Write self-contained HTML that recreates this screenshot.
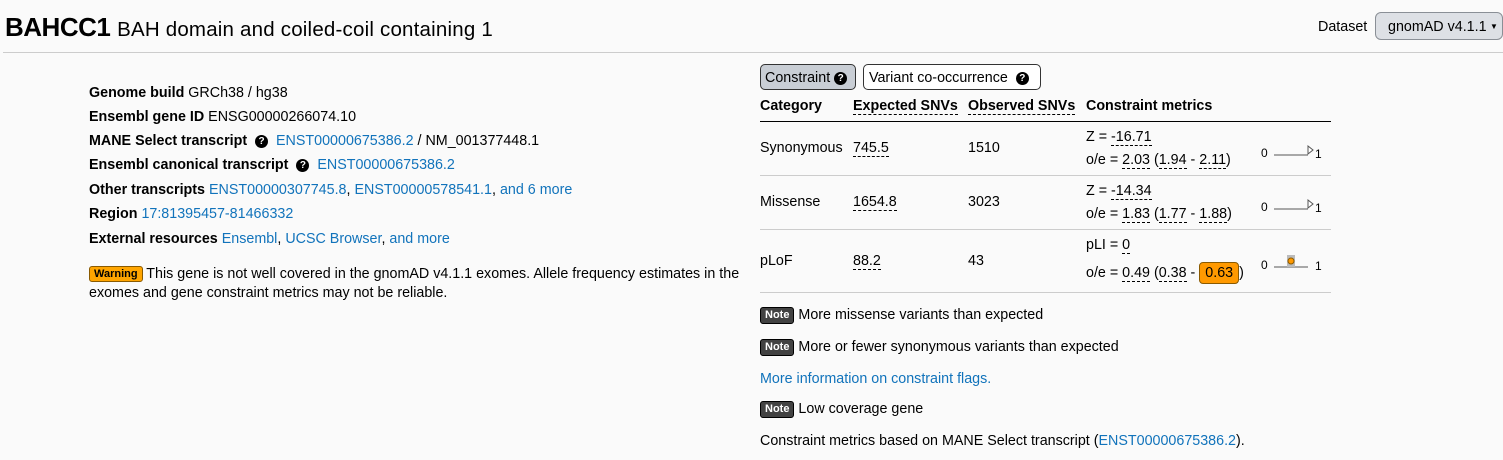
<!DOCTYPE html>
<html><head><meta charset="utf-8"><style>
*{box-sizing:border-box;margin:0;padding:0}
body{width:1503px;height:460px;background:#fafafa;font-family:"Liberation Sans",sans-serif;font-size:14.3px;color:#000;position:relative;overflow:hidden}
.a{position:absolute;white-space:nowrap}
a,.l{color:#1173bb;text-decoration:none}
b{font-weight:bold}
.u{border-bottom:1px dashed #000}
.q{display:inline-block;width:13px;height:13px;border-radius:50%;background:#000;color:#fff;font-size:10px;font-weight:bold;text-align:center;line-height:13px;vertical-align:1px}
.note{display:inline-block;background:#424242;color:#fff;font-size:11px;font-weight:bold;border:1px solid #000;border-radius:3px;padding:0 4px;line-height:15px;vertical-align:1px}
.hr{position:absolute;height:1px;background:#ccc}
</style></head><body>
<div class="a" style="left:5px;top:12px;font-size:26px;font-weight:bold;letter-spacing:-0.5px">BAHCC1 <span style="font-size:20.5px;font-weight:normal;letter-spacing:0.2px">BAH domain and coiled-coil containing 1</span></div>
<div class="hr" style="left:3px;right:0;top:52px"></div>
<div class="a" style="left:1318px;top:19px">Dataset</div>
<div class="a" style="left:1375px;top:12px;width:128px;height:28px;background:#dde0e5;border:1px solid #8a8f96;border-radius:6px;padding:6px 0 0 12px">gnomAD v4.1.1<span style="font-size:8px;position:absolute;left:114px;top:9px">▼</span></div>

<div class="a" style="left:89px;top:85px"><b>Genome build</b> GRCh38 / hg38</div>
<div class="a" style="left:89px;top:109px"><b>Ensembl gene ID</b> ENSG00000266074.10</div>
<div class="a" style="left:89px;top:133px"><b>MANE Select transcript</b> &nbsp;<span class="q">?</span> &nbsp;<a>ENST00000675386.2</a> / NM_001377448.1</div>
<div class="a" style="left:89px;top:157px"><b>Ensembl canonical transcript</b> &nbsp;<span class="q">?</span> &nbsp;<a>ENST00000675386.2</a></div>
<div class="a" style="left:89px;top:182px"><b>Other transcripts</b> <a>ENST00000307745.8</a>, <a>ENST00000578541.1</a>, <a>and 6 more</a></div>
<div class="a" style="left:89px;top:206px"><b>Region</b> <a>17:81395457-81466332</a></div>
<div class="a" style="left:89px;top:231px"><b>External resources</b> <a>Ensembl</a>, <a>UCSC Browser</a>, <a>and more</a></div>
<div class="a" style="left:89px;top:265px;line-height:19px;white-space:normal;width:665px"><span style="display:inline-block;background:#ffa500;border:1px solid #8a5a00;border-radius:3px;font-size:11px;font-weight:bold;padding:0 4px;line-height:14px;vertical-align:1px">Warning</span> This gene is not well covered in the gnomAD v4.1.1 exomes. Allele frequency estimates in the exomes and gene constraint metrics may not be reliable.</div>

<div class="a" style="left:760px;top:64px;width:96px;height:26px;background:#c9ced5;border:1px solid #333;border-radius:5px;padding:5px 0 0 4px">Constraint <span class="q">?</span></div>
<div class="a" style="left:863px;top:64px;width:178px;height:26px;border:1px solid #333;border-radius:5px;padding:5px 0 0 5px;background:#fff">Variant co-occurrence &nbsp;<span class="q">?</span></div>

<div class="a" style="left:760px;top:98px"><b>Category</b></div>
<div class="a" style="left:853px;top:98px"><b class="u">Expected SNVs</b></div>
<div class="a" style="left:968px;top:98px"><b class="u">Observed SNVs</b></div>
<div class="a" style="left:1086px;top:98px"><b>Constraint metrics</b></div>
<div class="hr" style="left:760px;width:571px;top:121px;background:#000"></div>

<div class="a" style="left:760px;top:140px">Synonymous</div>
<div class="a" style="left:853px;top:140px"><span class="u">745.5</span></div>
<div class="a" style="left:968px;top:140px">1510</div>
<div class="a" style="left:1086px;top:129px">Z = <span class="u">-16.71</span></div>
<div class="a" style="left:1086px;top:152px">o/e = <span class="u">2.03</span> (<span class="u">1.94</span> - <span class="u">2.11</span>)</div>
<div class="hr" style="left:760px;width:571px;top:175px"></div>

<div class="a" style="left:760px;top:194px">Missense</div>
<div class="a" style="left:853px;top:194px"><span class="u">1654.8</span></div>
<div class="a" style="left:968px;top:194px">3023</div>
<div class="a" style="left:1086px;top:183px">Z = <span class="u">-14.34</span></div>
<div class="a" style="left:1086px;top:206px">o/e = <span class="u">1.83</span> (<span class="u">1.77</span> - <span class="u">1.88</span>)</div>
<div class="hr" style="left:760px;width:571px;top:229px"></div>

<div class="a" style="left:760px;top:253px">pLoF</div>
<div class="a" style="left:853px;top:253px"><span class="u">88.2</span></div>
<div class="a" style="left:968px;top:253px">43</div>
<div class="a" style="left:1086px;top:237px">pLI = <span class="u">0</span></div>
<div class="a" style="left:1086px;top:262px">o/e = <span class="u">0.49</span> (<span class="u">0.38</span> - <span style="display:inline-block;background:#ff9900;border:1px solid #8a5a00;border-radius:4px;padding:2px 5px;font-size:14.3px">0.63</span>)</div>
<div class="hr" style="left:760px;width:571px;top:292px"></div>

<svg class="a" style="left:1255px;top:135px" width="80" height="140" viewBox="0 0 80 140" font-family="Liberation Sans" font-size="12">
<text x="6" y="22">0</text><line x1="19" y1="20" x2="53" y2="20" stroke="#777" stroke-width="1.3"/><path d="M53 11 L58 15 L53 19 Z" fill="#fff" stroke="#555"/><text x="60" y="23">1</text>
<text x="6" y="76">0</text><line x1="19" y1="74" x2="53" y2="74" stroke="#777" stroke-width="1.3"/><path d="M53 65 L58 69 L53 73 Z" fill="#fff" stroke="#555"/><text x="60" y="77">1</text>
<text x="6" y="134">0</text><line x1="19" y1="132" x2="53" y2="132" stroke="#777" stroke-width="1.3"/><rect x="32" y="120" width="8" height="12" fill="#bbb"/><circle cx="36" cy="126" r="3" fill="#ff9900" stroke="#8a5a00"/><text x="60" y="135">1</text>
</svg>

<div class="a" style="left:760px;top:307px"><span class="note">Note</span> More missense variants than expected</div>
<div class="a" style="left:760px;top:339px"><span class="note">Note</span> More or fewer synonymous variants than expected</div>
<div class="a" style="left:760px;top:371px"><a>More information on constraint flags.</a></div>
<div class="a" style="left:760px;top:401px"><span class="note">Note</span> Low coverage gene</div>
<div class="a" style="left:760px;top:433px">Constraint metrics based on MANE Select transcript (<a>ENST00000675386.2</a>).</div>
</body></html>
